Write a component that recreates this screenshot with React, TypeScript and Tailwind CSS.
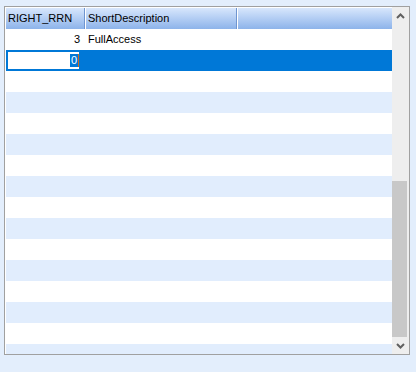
const rows = Array.from({ length: 16 }, (_, i) => i);

const ChevronUp = () => (
  <svg width="9" height="6" viewBox="0 0 9 6">
    <polyline points="1,5 4.5,1.5 8,5" fill="none" stroke="#606060" strokeWidth="2" />
  </svg>
);

const ChevronDown = () => (
  <svg width="9" height="6" viewBox="0 0 9 6">
    <polyline points="1,1 4.5,4.5 8,1" fill="none" stroke="#606060" strokeWidth="2" />
  </svg>
);

export default function App() {
  return (
    <div
      className="w-[416px] h-[372px] bg-[#e3eefc] pt-[6px] pl-[4px] text-[11px] text-black"
      style={{ fontFamily: '"Liberation Sans", Arial, sans-serif' }}
    >
      <div className="w-[406px] h-[349px] border border-[#a0a0a0] bg-white flex">
        {/* grid */}
        <div className="flex-1 pl-[1px] pt-[1px] overflow-hidden flex flex-col">
          {/* header */}
          <div className="h-[21px] shrink-0 flex bg-gradient-to-b from-[#d8e7fc] to-[#8db3ea]">
            <div className="w-[79px] border-r border-[#6f95d0] pl-[2px] flex items-center">
              RIGHT_RRN
            </div>
            <div className="w-[152px] border-l border-white border-r border-r-[#6f95d0] pl-[2px] flex items-center">
              ShortDescription
            </div>
            <div className="flex-1 border-l border-white" />
          </div>
          {/* rows */}
          <div className="flex-1 overflow-hidden">
            {rows.map((i) => {
              if (i === 0) {
                return (
                  <div key={i} className="h-[21px] flex items-center bg-white">
                    <div className="w-[79px] text-right pr-[5px]">3</div>
                    <div className="pl-[3px]">FullAccess</div>
                  </div>
                );
              }
              if (i === 1) {
                return (
                  <div key={i} className="h-[21px] flex items-center bg-[#0078d7]">
                    <div className="ml-[2px] w-[71px] h-[17px] bg-white flex items-center justify-end">
                      <span className="bg-[#0078d7] text-white leading-[13px] px-[1px]">0</span>
                      <span className="w-[1px] h-[13px] bg-[#c86a1e]" />
                    </div>
                  </div>
                );
              }
              return (
                <div
                  key={i}
                  className={i % 2 === 1 ? "h-[21px] bg-[#e1edfd]" : "h-[21px] bg-white"}
                />
              );
            })}
          </div>
        </div>
        {/* scrollbar */}
        <div className="w-[17px] bg-[#eeeeee] flex flex-col">
          <div className="h-[17px] flex items-center justify-center">
            <ChevronUp />
          </div>
          <div className="h-[157px]" />
          <div className="flex-1 w-[15px] bg-[#c8c8c8]" />
          <div className="h-[17px] flex items-center justify-center">
            <ChevronDown />
          </div>
        </div>
      </div>
    </div>
  );
}
